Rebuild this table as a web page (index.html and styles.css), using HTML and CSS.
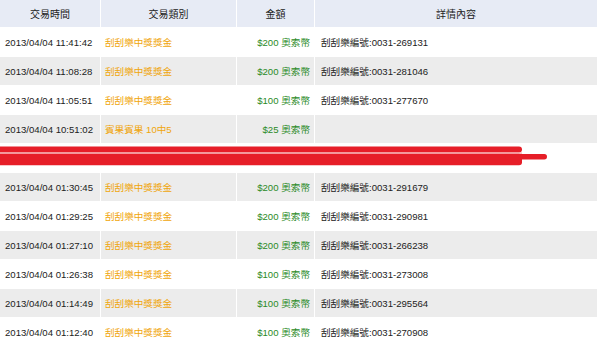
FILE: index.html
```html
<!DOCTYPE html>
<html lang="zh-Hant">
<head>
<meta charset="utf-8">
<link rel="stylesheet" href="styles.css">
</head>
<body>
<table class="log">
  <colgroup>
    <col class="c-time"><col class="c-type"><col class="c-amt"><col class="c-info">
  </colgroup>
  <thead>
    <tr><th>交易時間</th><th>交易類別</th><th>金額</th><th>詳情內容</th></tr>
  </thead>
  <tbody>
    <tr><td class="time">2013/04/04 11:41:42</td><td class="type">刮刮樂中獎獎金</td><td class="amt">$200 奧索幣</td><td class="info">刮刮樂編號:0031-269131</td></tr>
    <tr><td class="time">2013/04/04 11:08:28</td><td class="type">刮刮樂中獎獎金</td><td class="amt">$200 奧索幣</td><td class="info">刮刮樂編號:0031-281046</td></tr>
    <tr><td class="time">2013/04/04 11:05:51</td><td class="type">刮刮樂中獎獎金</td><td class="amt">$100 奧索幣</td><td class="info">刮刮樂編號:0031-277670</td></tr>
    <tr><td class="time">2013/04/04 10:51:02</td><td class="type">賓果賓果 10中5</td><td class="amt">$25 奧索幣</td><td class="info"></td></tr>
    <tr class="scribble"><td colspan="4">
      <svg class="mark" width="597" height="28" viewBox="0 0 597 28">
        <rect x="-6" y="2.5" width="528" height="6" rx="3" fill="#e61e28"/>
        <rect x="-6" y="8.5" width="528" height="1.2" fill="#f4a6a8"/>
        <rect x="-6" y="9.7" width="528" height="11.5" rx="3" fill="#e61e28"/>
        <rect x="505" y="10" width="42" height="5.5" rx="2.7" fill="#e61e28"/>
      </svg>
    </td></tr>
    <tr><td class="time">2013/04/04 01:30:45</td><td class="type">刮刮樂中獎獎金</td><td class="amt">$200 奧索幣</td><td class="info">刮刮樂編號:0031-291679</td></tr>
    <tr><td class="time">2013/04/04 01:29:25</td><td class="type">刮刮樂中獎獎金</td><td class="amt">$200 奧索幣</td><td class="info">刮刮樂編號:0031-290981</td></tr>
    <tr><td class="time">2013/04/04 01:27:10</td><td class="type">刮刮樂中獎獎金</td><td class="amt">$200 奧索幣</td><td class="info">刮刮樂編號:0031-266238</td></tr>
    <tr><td class="time">2013/04/04 01:26:38</td><td class="type">刮刮樂中獎獎金</td><td class="amt">$100 奧索幣</td><td class="info">刮刮樂編號:0031-273008</td></tr>
    <tr><td class="time">2013/04/04 01:14:49</td><td class="type">刮刮樂中獎獎金</td><td class="amt">$100 奧索幣</td><td class="info">刮刮樂編號:0031-295564</td></tr>
    <tr><td class="time">2013/04/04 01:12:40</td><td class="type">刮刮樂中獎獎金</td><td class="amt">$100 奧索幣</td><td class="info">刮刮樂編號:0031-270908</td></tr>
  </tbody>
</table>
</body>
</html>
```

FILE: styles.css
```css
html, body {
  margin: 0;
  padding: 0;
  background: #ffffff;
}

body {
  font-family: "Liberation Sans", "Noto Sans CJK TC", Arial, sans-serif;
  font-size: 9.6px;
  color: #222222;
  width: 600px;
  height: 350px;
  overflow: hidden;
}

.log {
  width: 597px;
  border-collapse: separate;
  border-spacing: 0;
  table-layout: fixed;
}

.c-time { width: 100px; }
.c-type { width: 136px; }
.c-amt  { width: 78px; }
.c-info { width: 283px; }

.log th {
  background: #e7ebf5;
  font-weight: normal;
  font-size: 10px;
  height: 27px;
  padding: 0;
  text-align: center;
  vertical-align: middle;
  color: #222222;
}

.log th + th,
.log td + td {
  border-left: 1px solid #ffffff;
}

.log td {
  height: 28px;
  padding: 0;
  border-top: 1px solid #ffffff;
  vertical-align: middle;
  white-space: nowrap;
}

.log tbody tr:nth-child(even) td {
  background: #ececec;
}

.time {
  padding-left: 5px !important;
  color: #222222;
}

.type {
  padding-left: 4px !important;
  color: #f0a50a;
}

.amt {
  text-align: right;
  padding-right: 4px !important;
  color: #2a8a26;
}

.info {
  padding-left: 6px !important;
  color: #222222;
}

.scribble td {
  padding: 0;
  line-height: 0;
}

.mark {
  display: block;
}
```
